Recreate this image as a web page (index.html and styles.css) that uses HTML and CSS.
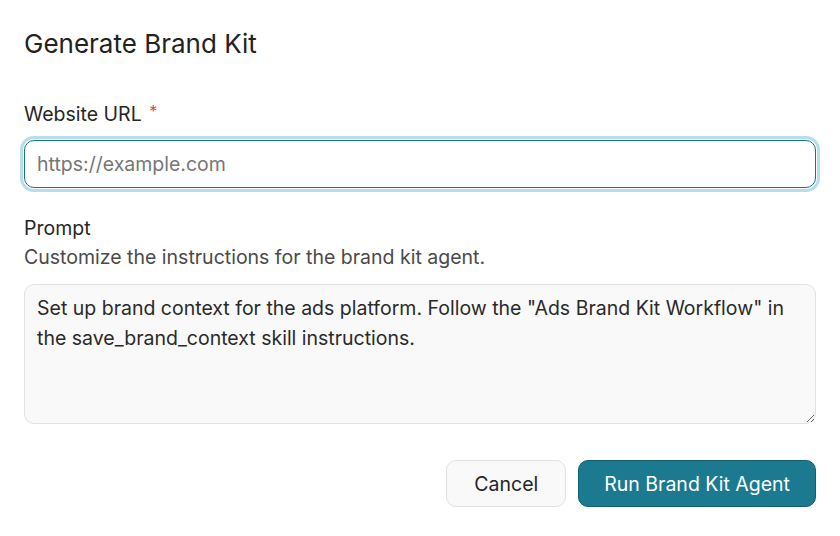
FILE: index.html
```html
<!DOCTYPE html>
<html lang="en">
<head>
<meta charset="utf-8">
<link rel="stylesheet" href="styles.css">
<title>Generate Brand Kit</title>
</head>
<body>
<div class="dialog">
  <h1 class="title">Generate Brand Kit</h1>
  <div class="field field-url">
    <label class="label" for="url">Website URL <span class="req">*</span></label>
    <input id="url" class="input" type="text" placeholder="https://example.com">
  </div>
  <div class="field field-prompt">
    <label class="label" for="prompt">Prompt</label>
    <p class="hint">Customize the instructions for the brand kit agent.</p>
    <textarea id="prompt" class="textarea">Set up brand context for the ads platform. Follow the "Ads Brand Kit Workflow" in the save_brand_context skill instructions.</textarea>
  </div>
  <div class="actions">
    <button class="btn btn-secondary">Cancel</button>
    <button class="btn btn-primary">Run Brand Kit Agent</button>
  </div>
</div>
</body>
</html>
```
FILE: styles.css
```css
* { box-sizing: border-box; }
html, body { margin: 0; padding: 0; background: #ffffff; }
body {
  font-family: Inter, "Noto Sans", "Liberation Sans", sans-serif;
  color: #262626;
}
.dialog {
  width: 840px;
  height: 536px;
  padding: 27px 24px 24px 24px;
  display: flex;
  flex-direction: column;
}
.title {
  margin: 0;
  font-size: 26px;
  font-weight: 400;
  line-height: 34px;
  color: #222222;
}
.field-url { margin-top: 37px; }
.label {
  display: block;
  font-size: 19.5px;
  line-height: 26px;
  color: #262626;
}
.req { color: #e5484d; font-size: 16px; vertical-align: 4px; margin-left: 2px; }
.input {
  display: block;
  margin-top: 13px;
  width: 100%;
  height: 48px;
  border: 1px solid #17748a;
  border-radius: 10px;
  box-shadow: 0 0 0 1px #ffffff, 0 0 0 4px #b6deea;
  padding: 0 12px;
  font-family: inherit;
  font-size: 19.5px;
  color: #262626;
  background: #fff;
  outline: none;
}
.input::placeholder { color: #767676; }
.field-prompt { margin-top: 27px; }
.hint {
  margin: 3px 0 0 0;
  font-size: 19.5px;
  line-height: 26px;
  color: #4a4a4a;
}
.textarea {
  display: block;
  margin-top: 14px;
  width: 100%;
  height: 140px;
  resize: vertical;
  border: 1px solid #e2e2e2;
  border-radius: 10px;
  background: #f9f9f9;
  padding: 8px 12px;
  font-family: inherit;
  font-size: 19.5px;
  line-height: 30px;
  color: #2a2a2a;
}
.actions {
  margin-top: 36px;
  display: flex;
  justify-content: flex-end;
  gap: 12px;
}
.btn {
  height: 47px;
  border-radius: 10px;
  font-family: inherit;
  font-size: 19.5px;
  cursor: pointer;
}
.btn-secondary {
  padding: 0 27px;
  background: #f9f9f9;
  border: 1px solid #e2e2e2;
  color: #262626;
}
.btn-primary {
  padding: 0 25px;
  background: #1b7a8f;
  border: 1px solid #135e6f;
  color: #ffffff;
}
```
